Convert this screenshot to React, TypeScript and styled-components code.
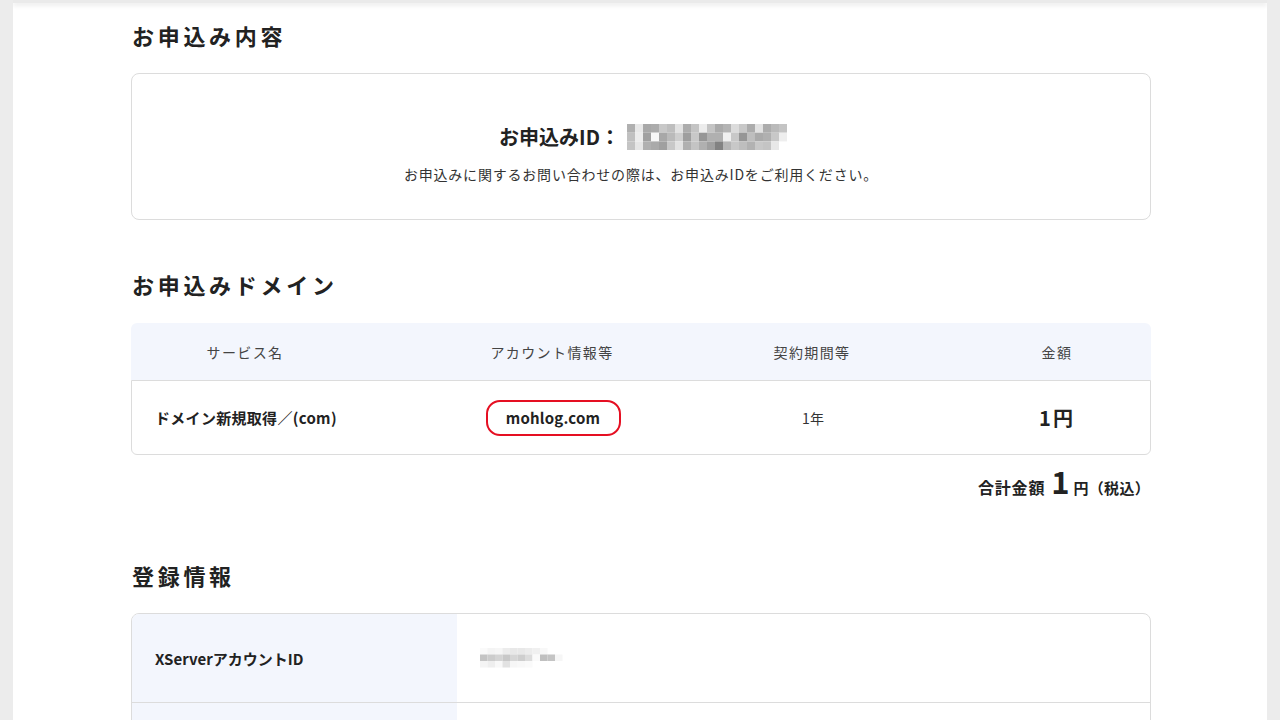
import React from "react";
import styled, { createGlobalStyle } from "styled-components";

const GlobalStyle = createGlobalStyle`
  html, body { margin: 0; padding: 0; }
  body {
    background: #ececec;
    font-family: "Noto Sans CJK JP", "Noto Sans", sans-serif;
    color: #222;
  }
`;

const Frame = styled.div`
  margin: 0 13px 0 13px;
  background: #fff;
  min-height: 720px;
  overflow: hidden;
`;

const TopBar = styled.div`
  height: 3px;
  background: #eaeaea;
  box-shadow: 0 2px 5px rgba(0, 0, 0, 0.12);
`;

const Content = styled.main`
  width: 1020px;
  margin: 0 0 0 118px;
  padding-top: 16px;
`;

const Heading = styled.h2<{ $top?: number; $bottom?: number }>`
  margin: ${(p) => p.$top ?? 0}px 0 ${(p) => p.$bottom ?? 22}px 1px;
  font-size: 22px;
  line-height: 32px;
  font-weight: 700;
  letter-spacing: 3.7px;
  color: #222;
`;

const InfoBox = styled.section`
  box-sizing: border-box;
  height: 147px;
  border: 1px solid #dcdcdc;
  border-radius: 8px;
  display: flex;
  flex-direction: column;
  align-items: center;
  padding-top: 49px;
  gap: 12px;
`;

const IdLine = styled.div`
  display: flex;
  align-items: center;
  gap: 7px;
  font-size: 20px;
  font-weight: 700;
  line-height: 28px;
  color: #222;
  padding-left: 4px;
`;

const Note = styled.p`
  margin: 0;
  font-size: 14px;
  line-height: 22px;
  letter-spacing: 0.8px;
  color: #333;
`;

const TableGrid = styled.div`
  display: grid;
  grid-template-columns: 228px 386px 134px 1fr;
`;

const HeadRow = styled(TableGrid)`
  height: 57px;
  background: #f3f6fd;
  border-radius: 6px 6px 0 0;
`;

const BodyRow = styled(TableGrid)`
  box-sizing: border-box;
  height: 75px;
  border: 1px solid #dcdcdc;
  border-radius: 0 0 6px 6px;
`;

const HeadCell = styled.div<{ $padLeft?: number }>`
  display: flex;
  align-items: center;
  justify-content: center;
  padding-left: ${(p) => p.$padLeft ?? 0}px;
  font-size: 14px;
  letter-spacing: 1.4px;
  color: #444;
`;

const BodyCell = styled.div<{ $align?: string; $padLeft?: number }>`
  display: flex;
  align-items: center;
  justify-content: ${(p) => p.$align ?? "center"};
  padding-left: ${(p) => p.$padLeft ?? 0}px;
  font-size: 14px;
  color: #333;
`;

const ServiceName = styled.span`
  font-size: 15px;
  font-weight: 700;
  color: #222;
  letter-spacing: 0.3px;
`;

const Circled = styled.span`
  display: inline-flex;
  align-items: center;
  justify-content: center;
  box-sizing: border-box;
  width: 135px;
  height: 36px;
  border: 2.5px solid #e50f22;
  border-radius: 14px;
  font-size: 15px;
  font-weight: 700;
  color: #222;
  letter-spacing: 0.2px;
`;

const Price = styled.span`
  font-size: 20px;
  font-weight: 700;
  letter-spacing: 2px;
  color: #222;
`;

const TotalLine = styled.div`
  display: flex;
  justify-content: flex-end;
  align-items: baseline;
  margin-top: 10px;
  padding-right: 1px;
  font-weight: 700;
  color: #222;
  line-height: 32px;
`;

const TotalLabel = styled.span`
  font-size: 16px;
  margin-right: 6px;
  letter-spacing: 0.8px;
`;

const TotalNum = styled.span`
  font-size: 31px;
  margin-right: 4px;
`;

const TotalUnit = styled.span`
  font-size: 15px;
  letter-spacing: 0.3px;
`;

const RegTable = styled.div`
  border: 1px solid #dcdcdc;
  border-radius: 8px;
  overflow: hidden;
`;

const RegRow = styled.div`
  display: grid;
  grid-template-columns: 325px 1fr;
  height: 88px;
  border-bottom: 1px solid #dcdcdc;
`;

const RegLabel = styled.div`
  display: flex;
  align-items: center;
  padding-left: 23px;
  background: #f3f6fd;
  font-size: 15px;
  font-weight: 700;
  color: #222;
`;

const RegValue = styled.div`
  display: flex;
  align-items: center;
  padding-left: 23px;
`;

type MosaicProps = { rows: number[][]; cw: number; ch: number };

const Mosaic = ({ rows, cw, ch }: MosaicProps) => {
  const w = Math.max(...rows.map((r) => r.length)) * cw;
  const h = rows.length * ch;
  return (
    <svg width={w} height={h} viewBox={`0 0 ${w} ${h}`} style={{ display: "block", filter: "blur(0.6px)" }}>
      {rows.map((r, y) =>
        r.map((v, x) =>
          v >= 255 ? null : (
            <rect key={`${x}-${y}`} x={x * cw} y={y * ch} width={cw} height={ch} fill={`rgb(${v},${v},${v})`} />
          )
        )
      )}
    </svg>
  );
};

const idRows = [
  [176, 232, 168, 172, 200, 190, 226, 172, 196, 236, 196, 170, 180, 220, 200, 172, 226, 172, 186, 196],
  [192, 236, 160, 248, 168, 186, 206, 158, 200, 150, 176, 176, 240, 200, 150, 190, 170, 176, 200, 238],
  [196, 230, 176, 170, 160, 200, 226, 176, 196, 176, 160, 130, 182, 200, 190, 178, 200, 196, 232, 255],
];

const accRows = [
  [250, 244, 246, 236, 232, 232, 236, 240, 248, 255, 255],
  [196, 204, 212, 200, 214, 206, 220, 250, 192, 196, 246],
  [244, 238, 248, 226, 246, 248, 250, 255, 255, 255, 255],
];

export default function App() {
  return (
    <>
      <GlobalStyle />
      <Frame>
        <TopBar />
        <Content>
          <Heading>お申込み内容</Heading>
          <InfoBox>
            <IdLine>
              お申込みID：
              <Mosaic rows={idRows} cw={8} ch={8.7} />
            </IdLine>
            <Note>お申込みに関するお問い合わせの際は、お申込みIDをご利用ください。</Note>
          </InfoBox>

          <Heading $top={48} $bottom={23}>お申込みドメイン</Heading>
          <HeadRow>
            <HeadCell>サービス名</HeadCell>
            <HeadCell>アカウント情報等</HeadCell>
            <HeadCell>契約期間等</HeadCell>
            <HeadCell $padLeft={84}>金額</HeadCell>
          </HeadRow>
          <BodyRow>
            <BodyCell $align="flex-start" $padLeft={23}>
              <ServiceName>ドメイン新規取得／(com)</ServiceName>
            </BodyCell>
            <BodyCell>
              <Circled>mohlog.com</Circled>
            </BodyCell>
            <BodyCell>1年</BodyCell>
            <BodyCell $padLeft={84}>
              <Price>1円</Price>
            </BodyCell>
          </BodyRow>
          <TotalLine>
            <TotalLabel>合計金額</TotalLabel>
            <TotalNum>1</TotalNum>
            <TotalUnit>円（税込）</TotalUnit>
          </TotalLine>

          <Heading $top={55}>登録情報</Heading>
          <RegTable>
            <RegRow>
              <RegLabel>XServerアカウントID</RegLabel>
              <RegValue>
                <Mosaic rows={accRows} cw={7.5} ch={6.5} />
              </RegValue>
            </RegRow>
            <RegRow>
              <RegLabel />
              <RegValue />
            </RegRow>
          </RegTable>
        </Content>
      </Frame>
    </>
  );
}
